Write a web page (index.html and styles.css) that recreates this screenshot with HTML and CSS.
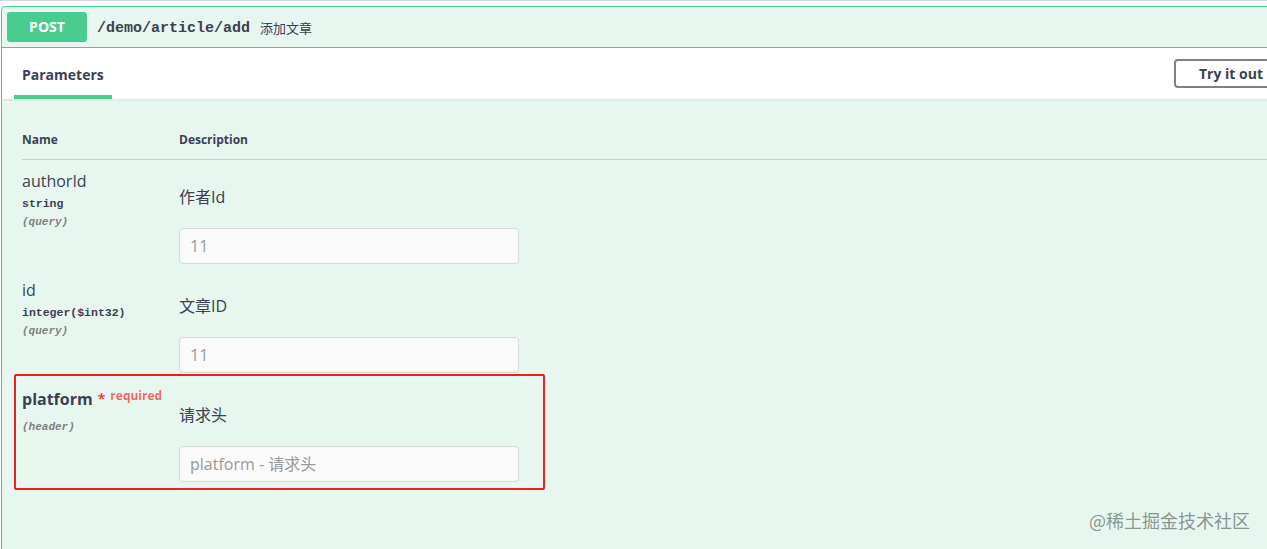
FILE: index.html
```html
<!DOCTYPE html>
<html lang="zh-CN">

<head>
    <meta charset="UTF-8" />
    <meta name="viewport" content="width=device-width, initial-scale=1.0" />
    <title>POST /demo/article/add</title>
    <link rel="stylesheet" href="styles.css">
</head>

<body>
    <div class="page">
        <div class="opblock">
            <div class="summary">
                <span class="method">POST</span>
                <span class="path">/demo/article/add</span>
                <span class="summary-desc">添加文章</span>
            </div>

            <div class="section-header">
                <div class="tab">Parameters</div>
                <button class="try-out">Try it out</button>
            </div>

            <div class="params">
                <div class="param-row head">
                    <div class="col-name">Name</div>
                    <div class="col-desc">Description</div>
                </div>

                <div class="param-row">
                    <div class="col-name">
                        <div class="param-name">authorId</div>
                        <div class="param-type">string</div>
                        <div class="param-in">(query)</div>
                    </div>
                    <div class="col-desc">
                        <p>作者Id</p>
                        <input type="text" placeholder="11" />
                    </div>
                </div>

                <div class="param-row">
                    <div class="col-name">
                        <div class="param-name">id</div>
                        <div class="param-type">integer($int32)</div>
                        <div class="param-in">(query)</div>
                    </div>
                    <div class="col-desc">
                        <p>文章ID</p>
                        <input type="text" placeholder="11" />
                    </div>
                </div>

                <div class="param-row">
                    <div class="col-name">
                        <div class="param-name required">platform<span class="star">*</span><span class="req">required</span></div>
                        <div class="param-in">(header)</div>
                    </div>
                    <div class="col-desc">
                        <p>请求头</p>
                        <input type="text" placeholder="platform - 请求头" />
                    </div>
                </div>

                <!-- 标注框 -->
                <div class="mark"></div>
            </div>
        </div>
    </div>

    <div class="watermark">@稀土掘金技术社区</div>
</body>

</html>
```

FILE: styles.css
```css
html,
body {
    margin: 0;
    padding: 0;
    height: 100%;
    overflow: hidden;
}

body {
    background-color: white;
    font-family: "Open Sans", "Noto Sans CJK SC", sans-serif;
    color: #3b4151;
    border-top: 1px solid #d6d6d6;
    box-sizing: border-box;
}

.page {
    padding: 5px 0 0 1px;
}

.opblock {
    width: 1300px;
    height: 600px;
    border: 1px solid #49cc90;
    border-radius: 4px;
    background-color: #e8f6f0;
}

.summary {
    display: flex;
    align-items: center;
    padding: 5px;
    border-bottom: 1px solid #49cc90;
}

.method {
    width: 80px;
    height: 30px;
    line-height: 30px;
    border-radius: 3px;
    background-color: #49cc90;
    color: white;
    font-size: 14px;
    font-weight: 700;
    text-align: center;
}

.path {
    margin-left: 10px;
    padding-top: 3px;
    font-family: "Liberation Mono", monospace;
    font-size: 15px;
    font-weight: 700;
    color: #3b4151;
}

.summary-desc {
    margin-left: 10px;
    font-size: 13px;
    color: #3b4151;
}

.section-header {
    display: flex;
    align-items: center;
    justify-content: space-between;
    height: 51px;
    padding: 0 0 0 12px;
    background-color: white;
    box-shadow: 0 1px 2px rgba(0, 0, 0, 0.1);
}

.tab {
    align-self: stretch;
    box-sizing: border-box;
    display: flex;
    align-items: center;
    height: 51px;
    padding: 5px 8px 0;
    font-size: 14px;
    font-weight: 700;
    border-bottom: 4px solid #49cc90;
}

.try-out {
    width: 150px;
    height: 29px;
    margin: -1px -22px 0 0;
    padding: 0 0 0 23px;
    text-align: left;
    border: 2px solid #808080;
    border-radius: 4px;
    background-color: white;
    font-family: "Open Sans", sans-serif;
    font-size: 14px;
    font-weight: 700;
    color: #3b4151;
}

.params {
    position: relative;
    padding: 21px 0 0 20px;
}

.param-row {
    display: flex;
    padding-top: 10px;
}

.param-row.head {
    padding: 12px 0;
    font-size: 12px;
    font-weight: 700;
    line-height: 15px;
    border-bottom: 1px solid rgba(59, 65, 81, 0.2);
}

.col-name {
    width: 157px;
    flex-shrink: 0;
}

.param-name {
    font-size: 16px;
    line-height: 22px;
}

.param-name.required {
    font-weight: 700;
}

.star {
    position: relative;
    top: -1px;
    margin-left: 5px;
    color: #f93e3e;
    font-size: 14px;
}

.req {
    position: relative;
    top: -5px;
    margin-left: 5px;
    color: rgba(255, 0, 0, 0.6);
    font-size: 12px;
    font-weight: 700;
}

.param-type {
    margin-top: 4px;
    font-family: "Liberation Mono", monospace;
    font-size: 11.5px;
    font-weight: 700;
    line-height: 16px;
}

.param-in {
    margin-top: 2px;
    font-family: "Liberation Mono", monospace;
    font-size: 11px;
    font-style: italic;
    font-weight: 700;
    line-height: 16px;
    color: #808080;
}

.param-name.required + .param-in {
    margin-top: 7px;
}

.col-desc p {
    margin: 16px 0 20px;
    font-size: 16px;
    line-height: 22px;
}

.col-desc input {
    display: block;
    box-sizing: border-box;
    width: 340px;
    height: 36px;
    margin: 5px 0;
    padding: 0 10px;
    border: 1px solid #d9d9d9;
    border-radius: 4px;
    background-color: #fafafa;
    font-family: "Open Sans", "Noto Sans CJK SC", sans-serif;
    font-size: 16px;
    color: #3b4151;
}

.col-desc input::placeholder {
    color: #999;
}

.mark {
    position: absolute;
    left: 12px;
    top: 275px;
    width: 527px;
    height: 112px;
    border: 2px solid #e8201f;
    border-radius: 2px;
}

.watermark {
    position: absolute;
    right: 17px;
    bottom: 16px;
    font-family: "Noto Sans CJK SC", sans-serif;
    font-size: 18px;
    color: rgba(110, 125, 120, 0.8);
}
```
